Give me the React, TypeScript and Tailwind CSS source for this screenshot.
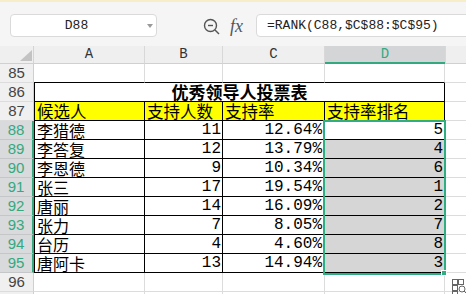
import React from "react";

const data: [string, string, string, string][] = [
  ["李猎德", "11", "12.64%", "5"],
  ["李答复", "12", "13.79%", "4"],
  ["李恩德", "9", "10.34%", "6"],
  ["张三", "17", "19.54%", "1"],
  ["唐丽", "14", "16.09%", "2"],
  ["张力", "7", "8.05%", "7"],
  ["台历", "4", "4.60%", "8"],
  ["唐阿卡", "13", "14.94%", "3"],
];

const cjk = "font-['Noto_Sans_CJK_SC',sans-serif]";
const mono = "font-['Liberation_Mono','Noto_Sans_CJK_SC',monospace]";
const rowNum = "font-['Liberation_Sans',sans-serif]";

function RowHead({ n, sel }: { n?: number; sel?: boolean }) {
  return sel ? (
    <div className={`w-[34px] shrink-0 h-full bg-[#d8dadc] border-r-2 border-r-[#34a97f] border-b border-b-[#c4c6c8] flex items-center justify-center text-[15px] leading-[18px] text-[#34a97f] ${rowNum}`}>
      {n}
    </div>
  ) : (
    <div className={`w-[34px] shrink-0 h-full bg-[#f0f0f0] border-r border-r-[#cfcfcf] border-b border-b-[#dcdcdc] flex items-center justify-center text-[15px] leading-[18px] text-[#444] ${rowNum}`}>
      {n}
    </div>
  );
}

export default function App() {
  return (
    <div className="relative w-[466px] h-[294px] overflow-hidden bg-white">
      <div className="h-[2px] bg-[#f8edc9]" />
      {/* toolbar */}
      <div className="h-[44px] bg-[#f5f5f5] flex items-start pt-[12px]">
        <div className="ml-[10px] w-[147px] h-[23px] bg-white border border-[#dadada] rounded-[4px] relative flex items-center justify-center shrink-0">
          <span className={`${mono} text-[13px] text-[#222] pr-[14px]`}>D88</span>
          <span className="absolute right-[3px] top-[9px] w-0 h-0 border-l-[3px] border-r-[3px] border-t-[4px] border-l-transparent border-r-transparent border-t-[#9a9a9a]" />
        </div>
        <div className="ml-[46px] mt-[4px] w-[18px] h-[17px] shrink-0">
          <svg width="18" height="17" viewBox="0 0 18 17" fill="none" stroke="#555" strokeWidth="1.4">
            <circle cx="7.5" cy="7.5" r="6" />
            <line x1="5" y1="7.5" x2="10" y2="7.5" />
            <line x1="12" y1="12" x2="16" y2="16" />
          </svg>
        </div>
        <div className="ml-[9px] mt-[1px] w-[20px] shrink-0 font-['Liberation_Serif',serif] italic text-[18px] leading-[22px] text-[#555]">
          fx
        </div>
        <div className="ml-[6px] w-[230px] h-[23px] bg-white border border-[#dadada] rounded-l-[4px] flex items-center pl-[10px] shrink-0">
          <span className={`${mono} text-[13px] text-[#222] whitespace-nowrap`}>=RANK(C88,$C$88:$C$95)</span>
        </div>
      </div>
      {/* column header */}
      <div className={`flex h-[18px] bg-[#efefef] ${mono} text-[14px] leading-[17px] text-[#333]`}>
        <div className="w-[34px] shrink-0 h-full border-r border-r-[#d4d4d4] border-b border-b-[#d0d0d0] relative">
          <svg className="absolute left-[20px] top-[4px]" width="12" height="11" viewBox="0 0 12 11">
            <polygon points="12,0 12,11 0,11" fill="#c3c3c3" />
          </svg>
        </div>
        <div className="w-[111px] shrink-0 h-full border-r border-r-[#d8d8d8] border-b border-b-[#d0d0d0] flex items-center justify-center">A</div>
        <div className="w-[78px] shrink-0 h-full border-r border-r-[#d8d8d8] border-b border-b-[#d0d0d0] flex items-center justify-center">B</div>
        <div className="w-[102px] shrink-0 h-full border-r border-r-[#d8d8d8] border-b border-b-[#d0d0d0] flex items-center justify-center">C</div>
        <div className="w-[120px] shrink-0 h-full bg-[#d3d5d7] border-b-2 border-b-[#34a97f] flex items-center justify-center text-[#34a97f]">D</div>
        <div className="flex-1 h-full border-l border-l-[#d8d8d8] border-b border-b-[#d0d0d0]" />
      </div>
      {/* row 85 */}
      <div className="flex h-[19px]">
        <RowHead n={85} />
        <div className="w-[111px] shrink-0 border-r border-r-[#dcdcdc] border-b border-b-black" />
        <div className="w-[78px] shrink-0 border-r border-r-[#dcdcdc] border-b border-b-black" />
        <div className="w-[102px] shrink-0 border-r border-r-[#dcdcdc] border-b border-b-black" />
        <div className="w-[120px] shrink-0 border-r border-r-[#dcdcdc] border-b border-b-black" />
        <div className="flex-1 border-b border-b-[#dcdcdc]" />
      </div>
      {/* row 86 */}
      <div className="flex h-[19px]">
        <RowHead n={86} />
        <div className={`w-[411px] shrink-0 border-l border-r border-b border-black flex items-center justify-center ${cjk} font-bold text-[17px] leading-[18px] text-black`}>
          优秀领导人投票表
        </div>
        <div className="flex-1 border-b border-b-[#dcdcdc]" />
      </div>
      {/* row 87 */}
      <div className={`flex h-[19px] ${cjk} text-[16.5px] leading-[18px] text-black`}>
        <RowHead n={87} />
        <div className="w-[111px] shrink-0 bg-[#ffff00] border-l border-r border-b border-black flex items-center pl-[2px] whitespace-nowrap">候选人</div>
        <div className="w-[78px] shrink-0 bg-[#ffff00] border-r border-b border-black flex items-center pl-[2px] whitespace-nowrap">支持人数</div>
        <div className="w-[102px] shrink-0 bg-[#ffff00] border-r border-b border-black flex items-center pl-[2px] whitespace-nowrap">支持率</div>
        <div className="w-[120px] shrink-0 bg-[#ffff00] border-r border-b border-black flex items-center pl-[2px] whitespace-nowrap">支持率排名</div>
        <div className="flex-1 border-b border-b-[#dcdcdc]" />
      </div>
      {/* data rows */}
      {data.map((r, i) => (
        <div key={i} className="flex h-[19px] text-black">
          <RowHead n={88 + i} sel />
          <div className={`w-[111px] shrink-0 border-l border-r border-b border-black flex items-center pl-[2px] ${cjk} text-[16px] leading-[18px]`}>{r[0]}</div>
          <div className={`w-[78px] shrink-0 border-r border-b border-black flex items-center justify-end pr-[1px] ${mono} text-[16px] leading-[18px]`}>{r[1]}</div>
          <div className={`w-[102px] shrink-0 border-r border-b border-black flex items-center justify-end pr-[2px] ${mono} text-[16px] leading-[18px]`}>{r[2]}</div>
          <div className={`w-[120px] shrink-0 border-r border-b border-black flex items-center justify-end pr-[1px] ${mono} text-[16px] leading-[18px] ${i === 0 ? "bg-white" : "bg-[#d6d6d6]"}`}>{r[3]}</div>
          <div className="flex-1 border-b border-b-[#dcdcdc]" />
        </div>
      ))}
      {/* rows 96, 97 */}
      {[96, 97].map((n) => (
        <div key={n} className="flex h-[19px]">
          <RowHead n={n === 96 ? 96 : undefined} />
          <div className="w-[111px] shrink-0 border-r border-r-[#dcdcdc] border-b border-b-[#dcdcdc]" />
          <div className="w-[78px] shrink-0 border-r border-r-[#dcdcdc] border-b border-b-[#dcdcdc]" />
          <div className="w-[102px] shrink-0 border-r border-r-[#dcdcdc] border-b border-b-[#dcdcdc]" />
          <div className="w-[120px] shrink-0 border-r border-r-[#dcdcdc] border-b border-b-[#dcdcdc]" />
          <div className="flex-1 border-b border-b-[#dcdcdc]" />
        </div>
      ))}
      {/* selection overlay */}
      <div className="absolute left-[323px] top-[120px] w-[123px] h-[155px] border-2 border-[#2fae82] pointer-events-none" />
      <div className="absolute left-[441px] top-[270px] w-[6px] h-[6px] bg-[#2fae82] border border-white" />
      {/* quick analysis icon */}
      <svg className="absolute left-[452px] top-[279px]" width="16" height="16" viewBox="0 0 16 16" fill="none" stroke="#666" strokeWidth="1">
        <rect x="0.5" y="0.5" width="5" height="5" />
        <rect x="6.5" y="0.5" width="5" height="5" />
        <rect x="0.5" y="6.5" width="5" height="5" />
        <rect x="0.5" y="12.5" width="5" height="3" />
        <circle cx="10" cy="10" r="3" fill="white" />
        <line x1="12" y1="12" x2="15" y2="15" />
      </svg>
    </div>
  );
}
